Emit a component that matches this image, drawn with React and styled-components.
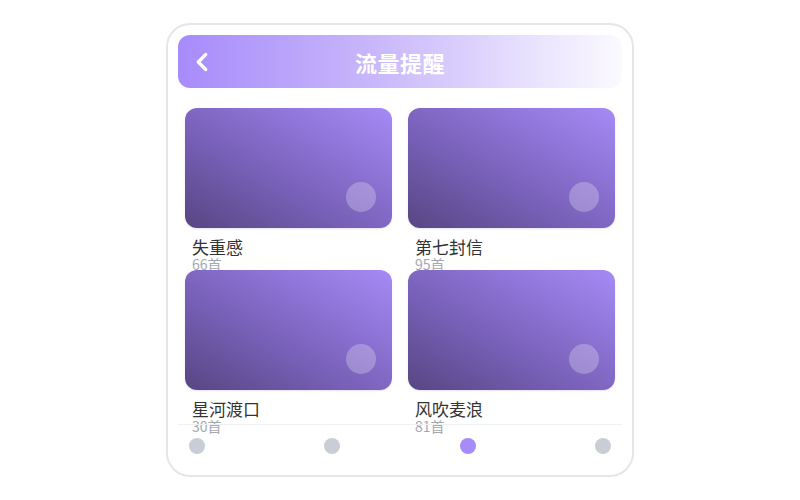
import React from "react";
import styled, { createGlobalStyle } from "styled-components";
import { ChevronLeft } from "lucide-react";

const playlists = [
	{ name: "失重感", count: 66 },
	{ name: "第七封信", count: 95 },
	{ name: "星河渡口", count: 30 },
	{ name: "风吹麦浪", count: 81 },
];

const Global = createGlobalStyle`
	* { box-sizing: border-box; }
	body {
		margin: 0;
		background: #fff;
		font-family: "Noto Sans CJK SC", "Noto Sans", sans-serif;
	}
`;

const Stage = styled.div`
	width: 800px;
	height: 500px;
	display: flex;
	align-items: center;
	justify-content: center;
`;

const Phone = styled.div`
	width: 468px;
	height: 454px;
	border: 2px solid #e6e6ea;
	border-radius: 24px;
	padding: 10px 10px 9px 10px;
	display: flex;
	flex-direction: column;
	background: #fff;
`;

const Header = styled.header`
	height: 53px;
	border-radius: 12px;
	background: linear-gradient(90deg, #a78bfa 0%, #c9b8fb 45%, #fbfaff 100%);
	display: grid;
	grid-template-columns: 44px 1fr 44px;
	align-items: center;
	flex-shrink: 0;
`;

const Back = styled.button`
	border: none;
	background: none;
	padding: 0 0 0 9px;
	color: #fff;
	display: flex;
	align-items: center;
	cursor: pointer;
`;

const Title = styled.h1`
	margin: 0;
	text-align: center;
	color: #fff;
	font-size: 22px;
	font-weight: 700;
	letter-spacing: 0.5px;
`;

const Content = styled.div`
	flex: 1;
	min-height: 0;
	padding: 20px 7px 0;
`;

const Grid = styled.div`
	display: grid;
	grid-template-columns: 1fr 1fr;
	grid-auto-rows: 146px;
	column-gap: 16px;
	row-gap: 16px;
`;

const Item = styled.div`
	display: flex;
	flex-direction: column;
	min-height: 0;
`;

const Cover = styled.div`
	position: relative;
	height: 120px;
	flex-shrink: 0;
	border-radius: 12px;
	background: linear-gradient(to bottom left, #a68af6 0%, #7b63bd 55%, #574683 100%);
	box-shadow: 0 1px 2px rgba(80, 60, 140, 0.15);
`;

const PlayDot = styled.span`
	position: absolute;
	right: 16px;
	bottom: 16px;
	width: 30px;
	height: 30px;
	border-radius: 50%;
	background: rgba(255, 255, 255, 0.25);
`;

const Name = styled.div`
	margin-top: 9px;
	padding: 0 7px;
	font-size: 17px;
	line-height: 20px;
	color: #333;
`;

const Count = styled.div`
	padding: 0 7px;
	font-size: 14px;
	line-height: 14px;
	color: #a3a7b0;
`;

const Nav = styled.nav`
	flex-shrink: 0;
	border-top: 1px solid #eef0f3;
	padding: 13px 11px 12px;
	display: flex;
	justify-content: space-between;
	align-items: center;
`;

const Dot = styled.span`
	width: 16px;
	height: 16px;
	border-radius: 50%;
	background: ${({ active }) => (active ? "#a78bfa" : "#c9ced6")};
`;

export default function App() {
	return (
		<Stage>
			<Global />
			<Phone>
				<Header>
					<Back aria-label="返回">
						<ChevronLeft size={30} strokeWidth={2.6} />
					</Back>
					<Title>流量提醒</Title>
					<span />
				</Header>
				<Content>
					<Grid>
						{playlists.map((p) => (
							<Item key={p.name}>
								<Cover>
									<PlayDot />
								</Cover>
								<Name>{p.name}</Name>
								<Count>{p.count}首</Count>
							</Item>
						))}
					</Grid>
				</Content>
				<Nav>
					{[0, 1, 2, 3].map((i) => (
						<Dot key={i} active={i === 2} />
					))}
				</Nav>
			</Phone>
		</Stage>
	);
}
